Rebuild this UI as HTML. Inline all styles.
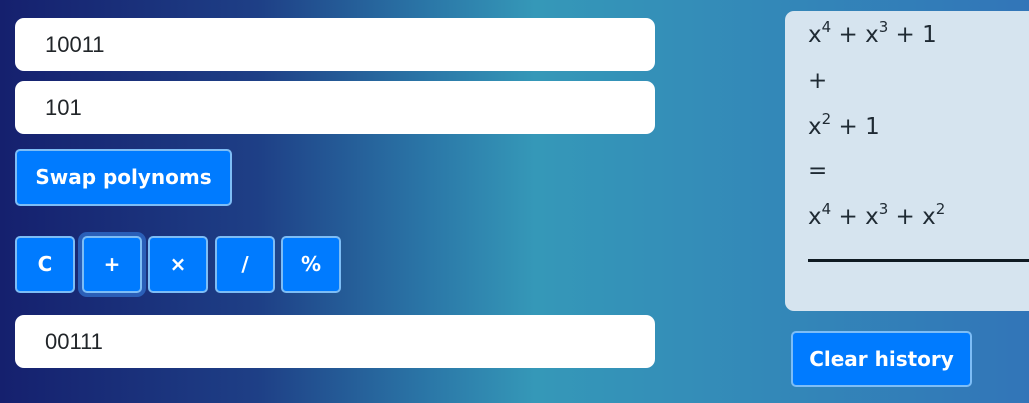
<!DOCTYPE html>
<html><head><meta charset="utf-8"><style>
*{box-sizing:border-box;margin:0;padding:0}
html,body{width:1029px;height:403px;overflow:hidden}
body{background:linear-gradient(90deg,#15206e 0%,#1e3f86 25%,#2b78a8 42%,#3598b8 52%,#3388b8 75%,#3275b8 100%);font-family:"Liberation Sans",sans-serif;position:relative}
.inp{position:absolute;left:15px;width:640px;height:53px;background:#fff;border-radius:9px;font-size:22px;color:#212529;padding-left:30px;line-height:53px}
.btn{position:absolute;background:#007bff;border:2px solid #7dbdf6;border-radius:5px;color:#fff;font-weight:bold;font-size:20px;text-align:center;font-family:"DejaVu Sans",sans-serif}
.op{top:236px;width:60px;height:57px;line-height:53px}
.panel{position:absolute;left:785px;top:11px;width:260px;height:300px;background:#d6e4ef;border-radius:9px;color:#1f2a33;font-size:23px;font-family:"DejaVu Sans",sans-serif}
.panel div{position:absolute;left:23px;white-space:nowrap}
sup{font-size:15px;vertical-align:10px;line-height:0}
</style></head><body>
<div class="inp" style="top:18px">10011</div>
<div class="inp" style="top:81px">101</div>
<div class="btn" style="left:15px;top:149px;width:217px;height:57px;line-height:53px">Swap polynoms</div>
<div class="btn op" style="left:15px">C</div>
<div class="btn op" style="left:82px;box-shadow:0 0 0 4px #2a5fb8">+</div>
<div class="btn op" style="left:148px">×</div>
<div class="btn op" style="left:215px">/</div>
<div class="btn op" style="left:281px">%</div>
<div class="inp" style="top:315px">00111</div>
<div class="panel">
<div style="top:11px">x<sup>4</sup> + x<sup>3</sup> + 1</div>
<div style="top:57px">+</div>
<div style="top:103px">x<sup>2</sup> + 1</div>
<div style="top:147px">=</div>
<div style="top:193px">x<sup>4</sup> + x<sup>3</sup> + x<sup>2</sup></div>
<div style="top:248px;width:240px;height:3px;background:#0f1a22"></div>
</div>
<div class="btn" style="left:791px;top:331px;width:181px;height:56px;line-height:52px">Clear history</div>
</body></html>
